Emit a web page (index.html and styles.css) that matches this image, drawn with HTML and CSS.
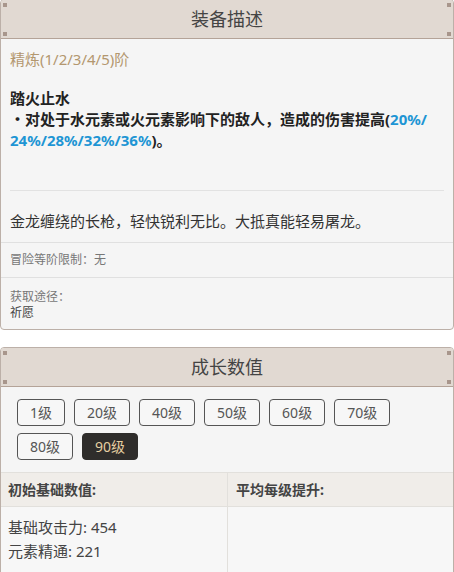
FILE: index.html
```html
<!DOCTYPE html>
<html lang="zh">
<head>
<meta charset="utf-8">
<link rel="stylesheet" href="styles.css">
</head>
<body>
<section class="card card-first">
  <header class="card-head">
    <span class="dot tl"></span><span class="dot bl"></span><span class="dot tr"></span><span class="dot br"></span>
    <h2>装备描述</h2>
  </header>
  <div class="desc">
    <p class="refine">精炼(1/2/3/4/5)阶</p>
    <p class="skill-name">踏火止水</p>
    <p class="skill-text">・对处于水元素或火元素影响下的敌人，造成的伤害提高(<span class="blue">20%/<wbr>24%/28%/32%/36%</span>)。</p>
    <hr class="sep">
    <p class="lore">金龙缠绕的长枪，轻快锐利无比。大抵真能轻易屠龙。</p>
  </div>
  <div class="row small">冒险等阶限制：无</div>
  <div class="row small source">
    <div>获取途径：</div>
    <div class="dark">祈愿</div>
  </div>
</section>

<section class="card">
  <header class="card-head">
    <span class="dot tl"></span><span class="dot bl"></span><span class="dot tr"></span><span class="dot br"></span>
    <h2>成长数值</h2>
  </header>
  <div class="levels">
    <button class="lv">1级</button>
    <button class="lv">20级</button>
    <button class="lv">40级</button>
    <button class="lv">50级</button>
    <button class="lv">60级</button>
    <button class="lv">70级</button>
    <button class="lv">80级</button>
    <button class="lv active">90级</button>
  </div>
  <div class="stats">
    <div class="th">初始基础数值:</div>
    <div class="th">平均每级提升:</div>
    <div class="td">
      <div>基础攻击力: 454</div>
      <div>元素精通: 221</div>
    </div>
    <div class="td"></div>
  </div>
</section>
</body>
</html>
```
FILE: styles.css
```css
* { box-sizing: border-box; }
html, body { margin: 0; padding: 0; background: #fff; }
body {
  font-family: "Noto Sans", "Noto Sans CJK SC", sans-serif;
  color: #333;
  font-size: 15px;
}
p { margin: 0; }

.card {
  border: 1px solid #bcb0a8;
  border-radius: 4px;
  background: #f5f5f5;
  overflow: hidden;
}
.card-first {
  margin-top: -1px;
  margin-bottom: 17px;
}
.card-head {
  position: relative;
  height: 39px;
  background: #e1d9d2;
  border-bottom: 1px solid #b4a398;
  display: flex;
  align-items: center;
  justify-content: center;
}
.card-head h2 {
  margin: 0;
  font-weight: normal;
  font-size: 18px;
  color: #444;
  line-height: 1;
}
.dot {
  position: absolute;
  width: 4px;
  height: 4px;
  background: #a8968c;
}
.dot.tl { left: 2px; top: 3px; }
.dot.bl { left: 2px; bottom: 2px; }
.dot.tr { right: 2px; top: 3px; }
.dot.br { right: 2px; bottom: 2px; }

.desc {
  padding: 9px 9px 10px;
  border-bottom: 1px solid #e0e0e0;
}
.refine {
  color: #b3976f;
  font-size: 15px;
  line-height: 22px;
  margin-bottom: 18px;
}
.skill-name, .skill-text {
  font-weight: bold;
  line-height: 21px;
  color: #222;
}
.blue { color: #1e95d4; }
.sep {
  border: 0;
  border-top: 1px solid #e2e2e2;
  margin: 39px 0 20px;
}
.lore { line-height: 21px; color: #333; }

.row {
  padding: 8px 9px;
  line-height: 18px;
}
.small { font-size: 12px; color: #777; }
.row + .row { border-top: 1px solid #e0e0e0; }
.source { padding: 11px 9px 8px; line-height: 16px; }
.dark { color: #444; }

.levels {
  display: flex;
  flex-wrap: wrap;
  gap: 7px 9px;
  padding: 12px 50px 12px 16px;
}
.lv {
  font-family: inherit;
  font-size: 14px;
  color: #555;
  background: #f7f7f7;
  border: 1px solid #555;
  border-radius: 4px;
  height: 27px;
  padding: 0 12px;
  line-height: 25px;
}
.lv.active {
  background: #2f2d2b;
  border-color: #2f2d2b;
  color: #e6cfa2;
}

.stats {
  display: grid;
  grid-template-columns: 227px 1fr;
  border-top: 1px solid #e2e0dc;
  margin-left: -1px;
}
.th {
  background: #f0ede9;
  height: 34px;
  line-height: 33px;
  padding: 0 8px;
  font-weight: bold;
  font-size: 14px;
  color: #444;
  border-bottom: 1px solid #e2e0dc;
}
.th + .th, .td + .td { border-left: 1px solid #e2e0dc; }
.td {
  background: #f7f7f7;
  padding: 8px 8px;
  line-height: 24px;
  color: #444;
  min-height: 80px;
}
```
